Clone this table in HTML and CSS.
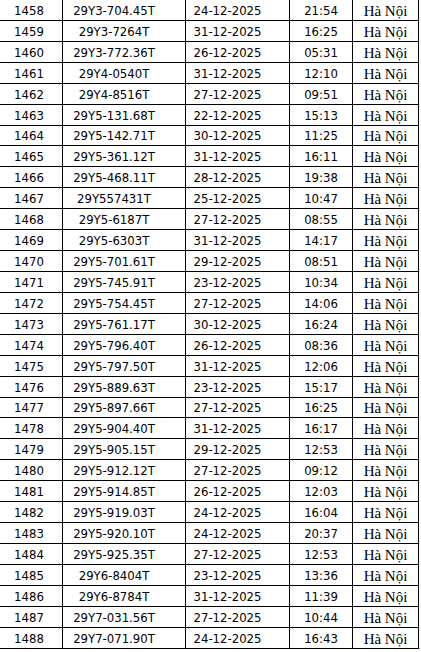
FILE: index.html
```html
<!DOCTYPE html>
<html lang="vi">
<head>
<meta charset="utf-8">
<title>Danh sách</title>
<link rel="stylesheet" href="styles.css">
</head>
<body>
<table class="list">
<colgroup>
<col class="c-no"><col class="c-plate"><col class="c-date"><col class="c-time"><col class="c-place"><col class="c-extra">
</colgroup>
<tbody>
<tr><td class="no">1458</td><td class="plate">29Y3-704.45T</td><td class="date">24-12-2025</td><td class="time">21:54</td><td class="place">Hà Nội</td><td class="extra"></td></tr>
<tr><td class="no">1459</td><td class="plate">29Y3-7264T</td><td class="date">31-12-2025</td><td class="time">16:25</td><td class="place">Hà Nội</td><td class="extra"></td></tr>
<tr><td class="no">1460</td><td class="plate">29Y3-772.36T</td><td class="date">26-12-2025</td><td class="time">05:31</td><td class="place">Hà Nội</td><td class="extra"></td></tr>
<tr><td class="no">1461</td><td class="plate">29Y4-0540T</td><td class="date">31-12-2025</td><td class="time">12:10</td><td class="place">Hà Nội</td><td class="extra"></td></tr>
<tr><td class="no">1462</td><td class="plate">29Y4-8516T</td><td class="date">27-12-2025</td><td class="time">09:51</td><td class="place">Hà Nội</td><td class="extra"></td></tr>
<tr><td class="no">1463</td><td class="plate">29Y5-131.68T</td><td class="date">22-12-2025</td><td class="time">15:13</td><td class="place">Hà Nội</td><td class="extra"></td></tr>
<tr><td class="no">1464</td><td class="plate">29Y5-142.71T</td><td class="date">30-12-2025</td><td class="time">11:25</td><td class="place">Hà Nội</td><td class="extra"></td></tr>
<tr><td class="no">1465</td><td class="plate">29Y5-361.12T</td><td class="date">31-12-2025</td><td class="time">16:11</td><td class="place">Hà Nội</td><td class="extra"></td></tr>
<tr><td class="no">1466</td><td class="plate">29Y5-468.11T</td><td class="date">28-12-2025</td><td class="time">19:38</td><td class="place">Hà Nội</td><td class="extra"></td></tr>
<tr><td class="no">1467</td><td class="plate">29Y557431T</td><td class="date">25-12-2025</td><td class="time">10:47</td><td class="place">Hà Nội</td><td class="extra"></td></tr>
<tr><td class="no">1468</td><td class="plate">29Y5-6187T</td><td class="date">27-12-2025</td><td class="time">08:55</td><td class="place">Hà Nội</td><td class="extra"></td></tr>
<tr><td class="no">1469</td><td class="plate">29Y5-6303T</td><td class="date">31-12-2025</td><td class="time">14:17</td><td class="place">Hà Nội</td><td class="extra"></td></tr>
<tr><td class="no">1470</td><td class="plate">29Y5-701.61T</td><td class="date">29-12-2025</td><td class="time">08:51</td><td class="place">Hà Nội</td><td class="extra"></td></tr>
<tr><td class="no">1471</td><td class="plate">29Y5-745.91T</td><td class="date">23-12-2025</td><td class="time">10:34</td><td class="place">Hà Nội</td><td class="extra"></td></tr>
<tr><td class="no">1472</td><td class="plate">29Y5-754.45T</td><td class="date">27-12-2025</td><td class="time">14:06</td><td class="place">Hà Nội</td><td class="extra"></td></tr>
<tr><td class="no">1473</td><td class="plate">29Y5-761.17T</td><td class="date">30-12-2025</td><td class="time">16:24</td><td class="place">Hà Nội</td><td class="extra"></td></tr>
<tr><td class="no">1474</td><td class="plate">29Y5-796.40T</td><td class="date">26-12-2025</td><td class="time">08:36</td><td class="place">Hà Nội</td><td class="extra"></td></tr>
<tr><td class="no">1475</td><td class="plate">29Y5-797.50T</td><td class="date">31-12-2025</td><td class="time">12:06</td><td class="place">Hà Nội</td><td class="extra"></td></tr>
<tr><td class="no">1476</td><td class="plate">29Y5-889.63T</td><td class="date">23-12-2025</td><td class="time">15:17</td><td class="place">Hà Nội</td><td class="extra"></td></tr>
<tr><td class="no">1477</td><td class="plate">29Y5-897.66T</td><td class="date">27-12-2025</td><td class="time">16:25</td><td class="place">Hà Nội</td><td class="extra"></td></tr>
<tr><td class="no">1478</td><td class="plate">29Y5-904.40T</td><td class="date">31-12-2025</td><td class="time">16:17</td><td class="place">Hà Nội</td><td class="extra"></td></tr>
<tr><td class="no">1479</td><td class="plate">29Y5-905.15T</td><td class="date">29-12-2025</td><td class="time">12:53</td><td class="place">Hà Nội</td><td class="extra"></td></tr>
<tr><td class="no">1480</td><td class="plate">29Y5-912.12T</td><td class="date">27-12-2025</td><td class="time">09:12</td><td class="place">Hà Nội</td><td class="extra"></td></tr>
<tr><td class="no">1481</td><td class="plate">29Y5-914.85T</td><td class="date">26-12-2025</td><td class="time">12:03</td><td class="place">Hà Nội</td><td class="extra"></td></tr>
<tr><td class="no">1482</td><td class="plate">29Y5-919.03T</td><td class="date">24-12-2025</td><td class="time">16:04</td><td class="place">Hà Nội</td><td class="extra"></td></tr>
<tr><td class="no">1483</td><td class="plate">29Y5-920.10T</td><td class="date">24-12-2025</td><td class="time">20:37</td><td class="place">Hà Nội</td><td class="extra"></td></tr>
<tr><td class="no">1484</td><td class="plate">29Y5-925.35T</td><td class="date">27-12-2025</td><td class="time">12:53</td><td class="place">Hà Nội</td><td class="extra"></td></tr>
<tr><td class="no">1485</td><td class="plate">29Y6-8404T</td><td class="date">23-12-2025</td><td class="time">13:36</td><td class="place">Hà Nội</td><td class="extra"></td></tr>
<tr><td class="no">1486</td><td class="plate">29Y6-8784T</td><td class="date">31-12-2025</td><td class="time">11:39</td><td class="place">Hà Nội</td><td class="extra"></td></tr>
<tr><td class="no">1487</td><td class="plate">29Y7-031.56T</td><td class="date">27-12-2025</td><td class="time">10:44</td><td class="place">Hà Nội</td><td class="extra"></td></tr>
<tr><td class="no">1488</td><td class="plate">29Y7-071.90T</td><td class="date">24-12-2025</td><td class="time">16:43</td><td class="place">Hà Nội</td><td class="extra"></td></tr>
</tbody>
</table>
</body>
</html>
```
FILE: styles.css
```css
html, body {
  margin: 0;
  padding: 0;
  background: #fff;
}
body {
  overflow: hidden;
}
.list {
  border-collapse: collapse;
  table-layout: fixed;
  margin: -1px 0 0 -1px;
  width: 430px;
  color: #000;
  font-family: "DejaVu Sans Condensed", "DejaVu Sans", sans-serif;
  font-stretch: condensed;
  font-size: 13px;
}
.c-no { width: 63px; }
.c-plate { width: 123px; }
.c-date { width: 104px; }
.c-time { width: 63px; }
.c-place { width: 66px; }
.c-extra { width: 11px; }
.list tr {
  height: 20.93px;
}
.list td {
  border: 1px solid #000;
  padding: 0 0 2px 0;
  line-height: 14px;
  vertical-align: bottom;
  text-align: center;
  white-space: nowrap;
  overflow: hidden;
}
.list td.no { padding-right: 4px; }
.list td.plate { padding-right: 20px; }
.list td.date { padding-right: 20px; }
.list td.place {
  font-family: "Liberation Serif", "Times New Roman", serif;
  font-stretch: normal;
  font-size: 15px;
}
.list td.extra {
  border-top-color: #d9d9d9;
  border-bottom-color: #d9d9d9;
  border-right-color: #d9d9d9;
}
```
